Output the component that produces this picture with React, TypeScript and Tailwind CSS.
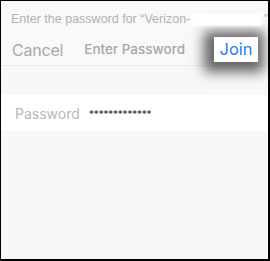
import React from 'react';

export default function App() {
  return (
    <div
      className="w-[270px] h-[261px] overflow-hidden bg-[#f8f8fa] border-t border-l border-r-2 border-b-2 border-black flex flex-col"
      style={{ fontFamily: 'Inter, "Liberation Sans", sans-serif' }}
    >
      {/* Prompt line */}
      <div
        className="h-[33px] shrink-0 bg-[#f9f9f9] flex items-center pl-[10px] pt-[4px] text-[12.5px] text-[#b2b2b2] whitespace-nowrap"
        style={{ fontFamily: '"Liberation Sans", Arial, sans-serif' }}
      >
        <span>Enter the password for &ldquo;Verizon-</span>
        <span className="inline-block w-[80px] h-[12px] bg-white blur-[1px] mx-[2px]" />
        <span>&rdquo;</span>
      </div>

      {/* Nav bar */}
      <div className="h-[32px] shrink-0 bg-[#f9f9f9] border-b border-[#ebebeb] flex items-center pl-[11px] pr-[10px]">
        <span className="text-[16px] text-[#a9a9a9] tracking-[-0.2px]">Cancel</span>
        <span className="ml-[21px] text-[13.5px] font-medium text-[#a5a5a5]">Enter Password</span>
        <div className="ml-auto w-[44px] h-[25px] bg-white flex items-center justify-center shadow-[-2px_2px_12px_8px_rgba(0,0,0,0.6)]">
          <span className="text-[16.5px] text-[#2b7cf1]">Join</span>
        </div>
      </div>

      {/* Password row */}
      <div className="mt-[29px] h-[36px] shrink-0 bg-white flex items-center pl-[14px]">
        <span className="text-[14px] text-[#b8b8b8]">Password</span>
        <span className="ml-[9px] text-[10px] font-semibold tracking-[-0.6px] text-[#4a4a4a] pt-[2px]">*************</span>
      </div>

      <div className="flex-1" />
    </div>
  );
}
